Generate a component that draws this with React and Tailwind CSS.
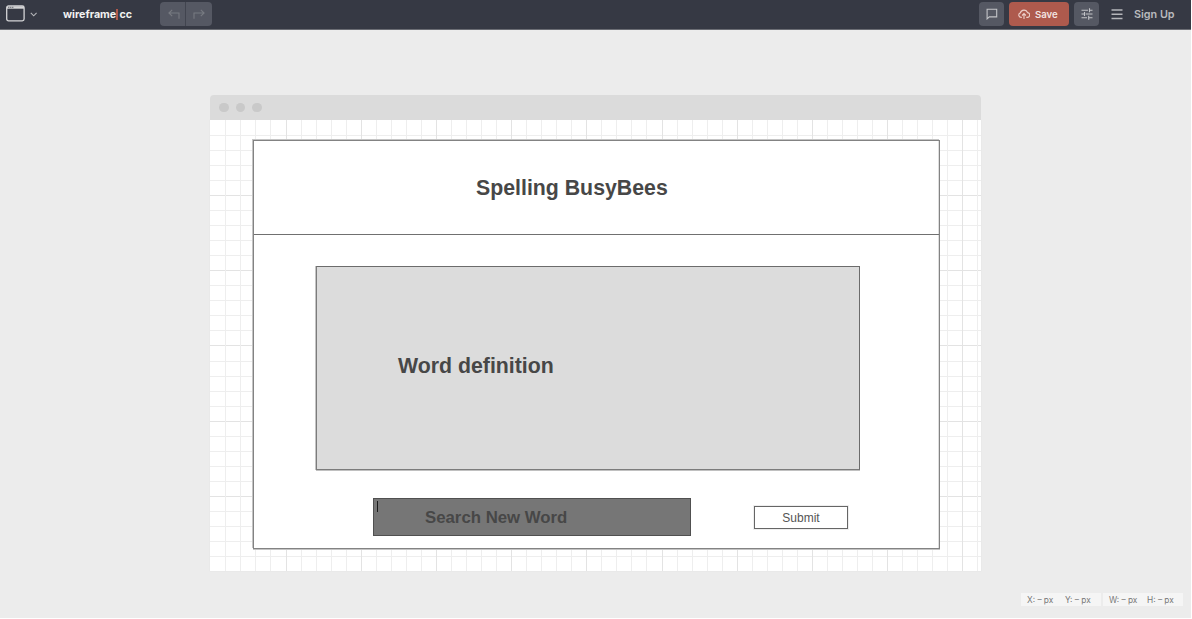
import React from "react";

const STEP = 15.04;
const columns = Array.from({ length: 51 }, (_, i) => ({ at: Math.floor(15.85 + i * STEP), major: i % 5 === 4 }));
const rows = Array.from({ length: 29 }, (_, i) => ({ at: Math.floor(15.4 + i * STEP), major: i % 5 === 4 }));

function Grid() {
  return (
    <svg className="absolute inset-0" width="771" height="451" shapeRendering="crispEdges" aria-hidden="true">
      {rows.map((r) => (
        <rect key={"r" + r.at} x="0" y={r.at} width="771" height="1" fill={r.major ? "#e3e3e3" : "#eeeeee"} />
      ))}
      {columns.map((c) => (
        <rect key={"c" + c.at} x={c.at} y="0" width="1" height="451" fill={c.major ? "#e3e3e3" : "#eeeeee"} />
      ))}
    </svg>
  );
}

function TopBar() {
  return (
    <header className="flex h-[30px] shrink-0 items-start border-b border-[#6b6d74] bg-[#363944] font-['Inter',sans-serif]">
      <svg className="ml-[6px] mt-[5px]" width="19" height="17" viewBox="0 0 19 17" fill="none" aria-hidden="true">
        <rect x="0.7" y="0.9" width="17.4" height="15" rx="1.8" stroke="#d4d4d6" strokeWidth="1.3" />
        <path d="M1 1.2h17v2.5H1z" fill="#d4d4d6" />
        <path d="M2.3 2.3h1M4.3 2.3h1M6.3 2.3h1" stroke="#363944" strokeWidth="1" />
      </svg>
      <svg className="ml-[5px] mt-[11px]" width="8" height="7" viewBox="0 0 8 7" fill="none" stroke="#b5b6ba" strokeWidth="1.1" aria-hidden="true">
        <path d="M0.8 1.8 3.7 4.8 6.6 1.8" />
      </svg>
      <div className="ml-[25px] flex w-[69px] items-center pt-[6px] leading-[16px] font-bold text-[#f2f2f2]">
        <span className="w-[54px] pt-px text-[10.7px]">wireframe</span>
        <span className="h-[11px] w-[2px] shrink-0 bg-[#b0584b]" />
        <span className="pl-px pt-px text-[10.7px]">cc</span>
      </div>
      <div className="ml-[28px] mt-[2px] flex h-6 w-[52px] overflow-hidden rounded-[4px] bg-[#555863]">
        <button className="flex h-6 w-[26px] items-center justify-center border-r border-[#41444f] pl-[2px]" aria-label="Undo">
          <svg width="12" height="11" viewBox="0 0 12 11" fill="none" stroke="#777a81" strokeWidth="1.1">
            <path d="M4.2 0.8 0.9 4l3.3 3.2M1 4h10v5.7" />
          </svg>
        </button>
        <button className="flex h-6 w-[26px] items-center justify-center pr-px" aria-label="Redo">
          <svg width="12" height="11" viewBox="0 0 12 11" fill="none" stroke="#777a81" strokeWidth="1.1">
            <path d="M7.8 0.8 11.1 4 7.8 7.2M11 4H1v5.7" />
          </svg>
        </button>
      </div>
      <div className="ml-auto flex pr-[16px] pt-[2px]">
        <button className="flex h-6 w-[25px] items-center justify-center rounded-[4px] bg-[#555863]" aria-label="Comments">
          <svg width="12" height="12" viewBox="0 0 12 12" fill="none" stroke="#c3c4c8" strokeWidth="1.1">
            <path d="M1.1 1.3h9.6v7.6H3.3l-2.2 2z" />
          </svg>
        </button>
        <button className="ml-[5px] flex h-6 w-[60px] items-center rounded-[4px] bg-[#ae5a4d] pl-[9px] text-[9.6px] leading-4 font-semibold text-[#f3e4e1]">
          <svg width="12" height="12" viewBox="0 0 12 12" fill="none" stroke="#edd0cb" strokeWidth="1.1">
            <path d="M3.8 9.4H3A2.3 2.3 0 0 1 2.4 4.9A3.7 3.7 0 0 1 9.5 4.6A2.4 2.4 0 0 1 9 9.4H8.3M6 11V5.7M4.1 7.5 6 5.6 7.9 7.5" />
          </svg>
          <span className="pl-[5px] pt-[2px]">Save</span>
        </button>
        <button className="ml-[5px] flex h-6 w-[25px] items-center justify-center rounded-[4px] bg-[#555863]" aria-label="Settings">
          <svg width="12" height="12" viewBox="0 0 12 12" fill="none" stroke="#c3c4c8" strokeWidth="1.1">
            <path d="M0.5 2.3H7M8.5 2.3H11.5M8.5 0.3V4.3M0.5 6H3M4.7 6H11.5M3.5 4V8M0.5 9.7H6M7.7 9.7H11.5M7.7 7.7V11.7" />
          </svg>
        </button>
        <svg className="ml-[12px] mt-[7px]" width="12" height="11" viewBox="0 0 12 11" stroke="#b5b6ba" strokeWidth="1.5" aria-hidden="true">
          <path d="M0.5 1h11M0.5 5.2h11M0.5 9.4h11" />
        </svg>
        <span className="ml-[11px] w-[41px] pt-[5px] text-[10.8px] leading-4 font-semibold whitespace-nowrap text-[#b9babd]">Sign Up</span>
      </div>
    </header>
  );
}

export default function App() {
  return (
    <div className="h-[619px] w-[1192px] overflow-hidden bg-white">
      <div className="flex h-[618px] w-[1191px] flex-col bg-[#ececec]">
        <TopBar />
        <main className="ml-[210px] mt-[65px] w-[771px] shrink-0 font-['Liberation_Sans',Arial,sans-serif]">
          <div className="flex h-[25px] items-center gap-[7px] rounded-t-[4px] bg-[#dbdbdb] pl-[9px]">
            <span className="size-[9.5px] rounded-full bg-[#c9c9c9]" />
            <span className="size-[9.5px] rounded-full bg-[#c9c9c9]" />
            <span className="size-[9.5px] rounded-full bg-[#c9c9c9]" />
          </div>
          <div className="relative h-[451px] bg-white pl-[43px] pt-[20px] shadow-[0_0_1px_#d8d8d8]">
            <Grid />
            <section className="relative flex h-[409px] w-[687px] flex-col border border-[#838383] bg-white shadow-[-1px_-1px_0_#c4c4c4,0_1px_0_#c4c4c4,inset_-1px_0_0_#dedede]">
              <div className="h-[94px] border-b border-[#707070] pl-[222px] pt-[33px]">
                <h1 className="text-[21.3px] leading-[28px] font-bold whitespace-nowrap text-[#474747]">Spelling BusyBees</h1>
              </div>
              <div className="ml-[62px] mt-[31px] h-[204px] w-[544px] border border-[#7c7c7c] border-t-[#6c6c6c] border-r-[#6c6c6c] bg-[#dcdcdc] pl-[81px] pt-[85px] shadow-[-1px_0_0_#c4c4c4,0_1px_0_#c0c0c0]">
                <h2 className="text-[21.3px] leading-[28px] font-bold whitespace-nowrap text-[#474747]">Word definition</h2>
              </div>
              <div className="flex pl-[119px] pt-[28px]">
                <div className="flex h-[38px] w-[318px] border border-[#505050] bg-[#767676] pl-[3px] pt-[2px]">
                  <span className="h-[11px] w-px bg-[#1a1a1a]" />
                  <span className="pl-[47px] pt-[5px] text-[16.8px] leading-[24px] font-bold whitespace-nowrap text-[#474747]">Search New Word</span>
                </div>
                <button className="ml-[63px] mt-[8px] h-[23px] w-[94px] border border-[#666666] text-[12px] leading-[20px] text-[#555555] shadow-[0_0_0_1px_#eeeeee]">Submit</button>
              </div>
            </section>
          </div>
        </main>
        <footer className="mr-[8px] mt-[22px] flex justify-end gap-[2px] font-['Inter',sans-serif] text-[8.3px] leading-[14px] text-[#777777]">
          <div className="flex h-[13px] w-[80px] bg-[#f5f5f5] pl-[6px]">
            <span className="w-[38px]">X: – px</span>
            <span>Y: – px</span>
          </div>
          <div className="flex h-[13px] w-[80px] bg-[#f5f5f5] pl-[6px]">
            <span className="w-[38px]">W: – px</span>
            <span>H: – px</span>
          </div>
        </footer>
      </div>
    </div>
  );
}
